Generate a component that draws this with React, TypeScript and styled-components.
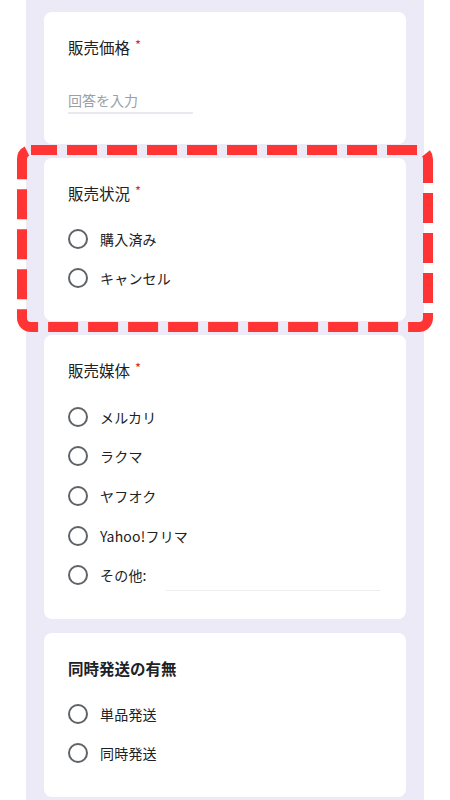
import styled, { createGlobalStyle } from "styled-components";

const GlobalStyle = createGlobalStyle`
  html, body {
    margin: 0;
    padding: 0;
    background: #ffffff;
  }
  body {
    font-family: "Noto Sans CJK JP", "Noto Sans", Roboto, sans-serif;
    color: #202124;
  }
`;

const Page = styled.div`
  position: relative;
  width: 450px;
  height: 800px;
  overflow: hidden;
`;

const Column = styled.div`
  margin: 0 26px;
  min-height: 800px;
  background: #edeaf7;
  padding: 12px 18px 0 18px;
  box-sizing: border-box;
  display: flex;
  flex-direction: column;
  gap: 14px;
`;

const Card = styled.section`
  background: #ffffff;
  border-radius: 8px;
  padding: 24px;
  display: flex;
  flex-direction: column;
`;

const Title = styled.div<{ $bold?: boolean }>`
  font-size: 15.5px;
  line-height: 22px;
  font-weight: ${({ $bold }) => ($bold ? 700 : 400)};
  color: #202124;
  display: flex;
  align-items: center;
  gap: 5px;
`;

const Required = styled.span`
  color: #d93025;
  font-size: 13px;
  line-height: 13px;
  margin-top: -6px;
`;

const TextInput = styled.div<{ $width: number }>`
  width: ${({ $width }) => $width}px;
  height: 24px;
  margin: 30px 0 6px 0;
  border-bottom: 2px solid #e8e8ee;
  font-size: 14px;
  line-height: 24px;
  color: #9aa0a6;
`;

const Options = styled.div<{ $step: number }>`
  margin-top: 16px;
  display: flex;
  flex-direction: column;
  & > * {
    height: ${({ $step }) => $step}px;
  }
`;

const Option = styled.label`
  display: flex;
  align-items: center;
  gap: 12px;
  font-size: 14px;
  color: #202124;
  letter-spacing: 0.2px;
`;

const Radio = styled.span`
  width: 20px;
  height: 20px;
  border: 2px solid #5f6368;
  border-radius: 50%;
  box-sizing: border-box;
  flex-shrink: 0;
`;

const OtherInput = styled.span`
  width: 214px;
  height: 20px;
  margin-left: 7px;
  margin-top: 10px;
  border-bottom: 1.5px solid #ededf0;
`;

const Highlight = styled.svg`
  position: absolute;
  left: 0;
  top: 0;
  pointer-events: none;
`;

type Question = {
  title: string;
  required?: boolean;
  bold?: boolean;
  options: string[];
  other?: boolean;
  step: number;
};

const questions: Question[] = [
  { title: "販売状況", required: true, options: ["購入済み", "キャンセル"], step: 38.5 },
  {
    title: "販売媒体",
    required: true,
    options: ["メルカリ", "ラクマ", "ヤフオク", "Yahoo!フリマ"],
    other: true,
    step: 39.6,
  },
  { title: "同時発送の有無", bold: true, options: ["単品発送", "同時発送"], step: 39 },
];

const RadioQuestion = ({ q }: { q: Question }) => (
  <Card>
    <Title $bold={q.bold}>
      {q.title}
      {q.required && <Required>*</Required>}
    </Title>
    <Options $step={q.step}>
      {q.options.map((o) => (
        <Option key={o}>
          <Radio />
          {o}
        </Option>
      ))}
      {q.other && (
        <Option>
          <Radio />
          その他:
          <OtherInput />
        </Option>
      )}
    </Options>
  </Card>
);

export default function App() {
  return (
    <>
      <GlobalStyle />
      <Page>
        <Column>
          <Card>
            <Title>
              販売価格
              <Required>*</Required>
            </Title>
            <TextInput $width={125}>回答を入力</TextInput>
          </Card>
          {questions.map((q) => (
            <RadioQuestion key={q.title} q={q} />
          ))}
        </Column>
        <Highlight width="450" height="800" viewBox="0 0 450 800">
          <rect
            x="22"
            y="150"
            width="406"
            height="177"
            rx="9"
            fill="none"
            stroke="#ff3434"
            strokeWidth="10"
            strokeDasharray="30 10"
            strokeDashoffset="4"
          />
        </Highlight>
      </Page>
    </>
  );
}
